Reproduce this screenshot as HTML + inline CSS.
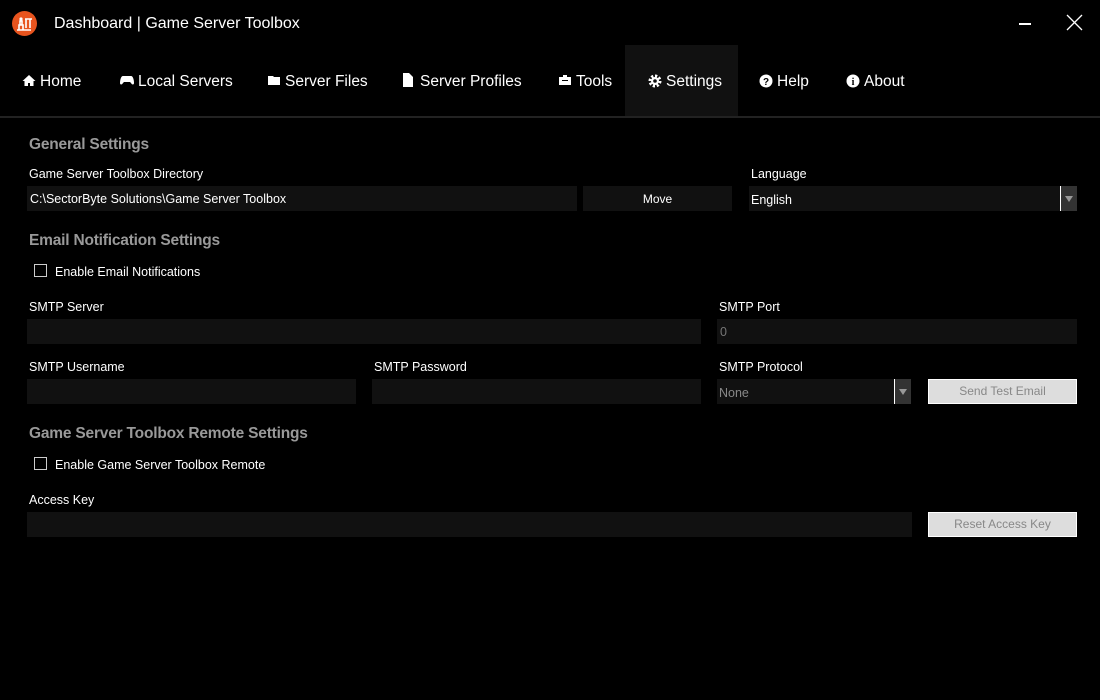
<!DOCTYPE html>
<html><head><meta charset="utf-8"><style>
*{margin:0;padding:0;box-sizing:border-box}
body{width:1100px;height:700px;background:#000;color:#fff;font-family:"Liberation Sans",sans-serif;position:relative;overflow:hidden}
.a{position:absolute;white-space:nowrap}
.nav{font-size:15.5px;top:73px;color:#fff}
.nav svg{position:absolute;left:-18px;top:1px}
.h{font-size:15.5px;color:#999;font-weight:bold;letter-spacing:-0.2px}
.l{font-size:12.5px;color:#fff}
.in{position:absolute;background:#111;height:25px}
.btn{position:absolute;background:#ddd;border:1px solid #fff;color:#888;font-size:12px;text-align:center;line-height:23px;height:25px}
.cb{position:absolute;width:13px;height:13px;border:1px solid #ccc}
.arr{position:absolute;background:#333;width:17px;height:25px;border-left:1px solid #fff}
.arr:after{content:"";position:absolute;left:4px;top:10px;border-left:4px solid transparent;border-right:4px solid transparent;border-top:6px solid #999}
</style></head><body>
<svg class="a" style="left:11px;top:10px" width="27" height="27" viewBox="0 0 27 27"><circle cx="13.5" cy="13.5" r="12.5" fill="#e8541e"/><path d="M6 20h14M8 20v-5h4v5M9 15v-4h2v4M14 9h7M15 9v9M19 9v9" stroke="#fff" stroke-width="1.6" fill="none"/><circle cx="10" cy="9" r="1.6" fill="#fff"/></svg>
<div class="a" style="left:54px;top:15px;font-size:16px">Dashboard | Game Server Toolbox</div>
<div class="a" style="left:1019px;top:23px;width:12px;height:2px;background:#fff"></div>
<svg class="a" style="left:1066px;top:14px" width="17" height="17"><path d="M1 1L16 16M16 1L1 16" stroke="#fff" stroke-width="1.3"/></svg>
<div class="a" style="left:625px;top:45px;width:113px;height:71px;background:#111"></div>
<div class="a" style="left:0;top:116px;width:1100px;height:2px;background:#222"></div>

<div class="a nav" style="left:40px"><svg width="14" height="13" viewBox="0 0 14 13"><path d="M7 1L0.5 7h2v5h3.5V9h2v3h3.5V7h2z" fill="#fff"/></svg>Home</div>
<div class="a nav" style="left:138px"><svg width="14" height="12" viewBox="0 0 14 12"><path d="M3 2h8c2 0 3 4 3 7 0 2-2 2-3 0l-1-1H4l-1 1c-1 2-3 2-3 0 0-3 1-7 3-7z" fill="#fff"/></svg>Local Servers</div>
<div class="a nav" style="left:285px"><svg width="14" height="12" viewBox="0 0 14 12"><path d="M1 2h5l1 1h6v8H1z" fill="#fff"/></svg>Server Files</div>
<div class="a nav" style="left:420px"><svg width="12" height="14" viewBox="0 0 12 14" style="left:-18px;top:0px"><path d="M1 0h6l4 4v10H1z" fill="#fff"/></svg>Server Profiles</div>
<div class="a nav" style="left:576px"><svg width="14" height="12" viewBox="0 0 14 12"><path d="M5 1h4v2h4v8H1V3h4z" fill="#fff"/><rect x="4" y="6" width="6" height="1" fill="#000"/></svg>Tools</div>
<div class="a nav" style="left:666px"><svg width="14" height="14" viewBox="0 0 14 14"><circle cx="7" cy="7" r="5" fill="none" stroke="#fff" stroke-width="3" stroke-dasharray="2.2 1.7"/><circle cx="7" cy="7" r="4" fill="#fff"/><circle cx="7" cy="7" r="1.8" fill="#111"/></svg>Settings</div>
<div class="a nav" style="left:777px"><svg width="14" height="14" viewBox="0 0 14 14"><circle cx="7" cy="7" r="6.5" fill="#fff"/><text x="7" y="11" font-size="10" font-weight="bold" text-anchor="middle" fill="#000" font-family="Liberation Sans">?</text></svg>Help</div>
<div class="a nav" style="left:864px"><svg width="14" height="14" viewBox="0 0 14 14"><circle cx="7" cy="7" r="6.5" fill="#fff"/><text x="7" y="11" font-size="10" font-weight="bold" text-anchor="middle" fill="#000" font-family="Liberation Serif">i</text></svg>About</div>

<div class="a h" style="left:29px;top:136px">General Settings</div>
<div class="a l" style="left:29px;top:167px">Game Server Toolbox Directory</div>
<div class="in" style="left:27px;top:186px;width:550px"></div>
<div class="a l" style="left:30px;top:192px">C:\SectorByte Solutions\Game Server Toolbox</div>
<div class="in" style="left:583px;top:186px;width:149px;font-size:12px;text-align:center;line-height:26px">Move</div>
<div class="a l" style="left:751px;top:167px">Language</div>
<div class="in" style="left:749px;top:186px;width:328px"></div>
<div class="a l" style="left:751px;top:193px">English</div>
<div class="arr" style="left:1060px;top:186px"></div>

<div class="a h" style="left:29px;top:232px">Email Notification Settings</div>
<div class="cb" style="left:34px;top:264px"></div>
<div class="a l" style="left:55px;top:265px">Enable Email Notifications</div>
<div class="a l" style="left:29px;top:300px">SMTP Server</div>
<div class="in" style="left:27px;top:319px;width:674px"></div>
<div class="a l" style="left:719px;top:300px">SMTP Port</div>
<div class="in" style="left:717px;top:319px;width:360px"></div>
<div class="a l" style="left:720px;top:325px;color:#777">0</div>
<div class="a l" style="left:29px;top:360px">SMTP Username</div>
<div class="in" style="left:27px;top:379px;width:329px"></div>
<div class="a l" style="left:374px;top:360px">SMTP Password</div>
<div class="in" style="left:372px;top:379px;width:329px"></div>
<div class="a l" style="left:719px;top:360px">SMTP Protocol</div>
<div class="in" style="left:717px;top:379px;width:194px"></div>
<div class="a l" style="left:719px;top:386px;color:#888">None</div>
<div class="arr" style="left:894px;top:379px"></div>
<div class="btn" style="left:928px;top:379px;width:149px">Send Test Email</div>

<div class="a h" style="left:29px;top:425px">Game Server Toolbox Remote Settings</div>
<div class="cb" style="left:34px;top:457px"></div>
<div class="a l" style="left:55px;top:458px">Enable Game Server Toolbox Remote</div>
<div class="a l" style="left:29px;top:493px">Access Key</div>
<div class="in" style="left:27px;top:512px;width:885px"></div>
<div class="btn" style="left:928px;top:512px;width:149px">Reset Access Key</div>
</body></html>
